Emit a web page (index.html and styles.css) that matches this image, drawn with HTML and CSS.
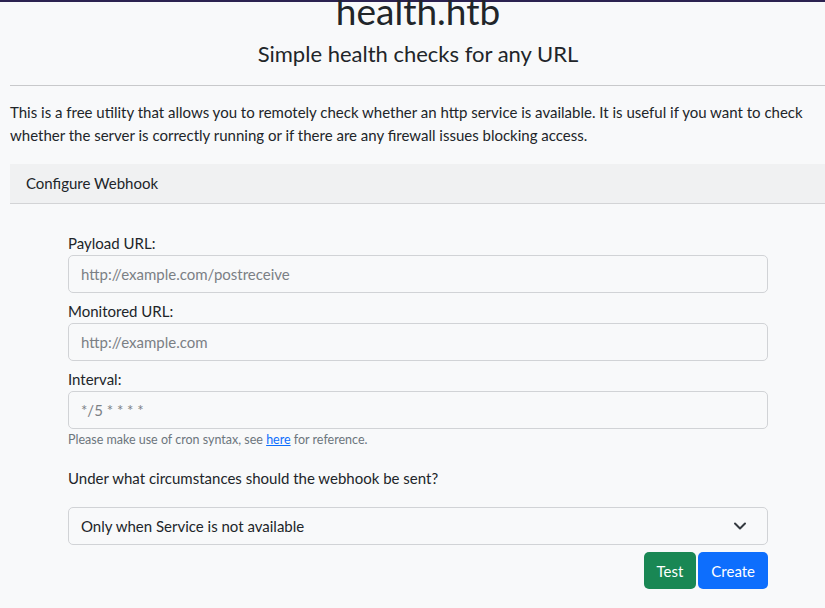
FILE: index.html
```html
<!DOCTYPE html>
<html lang="en">
<head>
<meta charset="utf-8">
<title>health.htb</title>
<link rel="stylesheet" href="styles.css">
</head>
<body>
<div class="topbar"></div>
<div class="page">
  <header class="hero">
    <h1 class="title">health.htb</h1>
    <h4 class="subtitle">Simple health checks for any URL</h4>
  </header>
  <hr class="rule">
  <p class="intro">This is a free utility that allows you to remotely check whether an http service is available. It is useful if you want to check whether the server is correctly running or if there are any firewall issues blocking access.</p>
  <section class="card">
    <div class="card-header">Configure Webhook</div>
    <div class="card-body">
      <form class="form">
        <div class="group">
          <label class="label" for="payload">Payload URL:</label>
          <input class="input" id="payload" type="text" placeholder="http://example.com/postreceive">
        </div>
        <div class="group">
          <label class="label" for="monitored">Monitored URL:</label>
          <input class="input" id="monitored" type="text" placeholder="http://example.com">
        </div>
        <div class="group group-last">
          <label class="label" for="interval">Interval:</label>
          <input class="input" id="interval" type="text" placeholder="*/5 * * * *">
          <div class="help">Please make use of cron syntax, see <a href="#" class="link">here</a> for reference.</div>
        </div>
        <div class="question">Under what circumstances should the webhook be sent?</div>
        <div class="select">
          <span>Only when Service is not available</span>
          <svg class="chevron" width="14" height="10" viewBox="0 0 14 10"><path d="M2 2.5l5 5 5-5" fill="none" stroke="#343a40" stroke-width="2" stroke-linecap="round" stroke-linejoin="round"/></svg>
        </div>
        <div class="actions">
          <button type="button" class="btn btn-test">Test</button>
          <button type="button" class="btn btn-create">Create</button>
        </div>
      </form>
    </div>
  </section>
</div>
</body>
</html>
```

FILE: styles.css
```css
html { overflow-x: hidden; }
body {
  margin: 0;
  background: #f8f9fa;
  color: #212529;
  font-family: Lato, "Noto Sans", sans-serif;
  font-size: 15px;
}
.topbar {
  height: 2px;
  background: #2b2250;
}
.page {
  margin-left: 10px;
  width: 816px;
}
.hero {
  text-align: center;
}
.title {
  margin: -15px 0 0;
  font-size: 37px;
  line-height: 48px;
  font-weight: 400;
}
.subtitle {
  margin: 4px 0 0;
  font-size: 22px;
  line-height: 30px;
  font-weight: 400;
}
.rule {
  margin: 16px 0 0;
  border: 0;
  border-top: 1px solid #c8c9cb;
}
.intro {
  margin: 15px 0 0;
  line-height: 23px;
  width: 800px;
}
.card {
  margin-top: 17px;
}
.card-header {
  background: #f0f1f2;
  border-bottom: 1px solid #d3d4d6;
  height: 39px;
  line-height: 39px;
  padding-left: 16px;
}
.card-body {
  padding-top: 28px;
}
.form {
  width: 700px;
  margin: 0 auto;
}
.group {
  margin-bottom: 7px;
}
.label {
  display: block;
  line-height: 22px;
  margin-bottom: 1px;
}
.input {
  display: block;
  box-sizing: border-box;
  width: 100%;
  height: 38px;
  padding: 0 12px;
  border: 1px solid #d1d3d6;
  border-radius: 5px;
  background: #f8f9fa;
  font: inherit;
  color: #212529;
}
.input::placeholder {
  color: #7b8085;
}
.group-last {
  margin-bottom: 0;
}
.help {
  font-size: 12.5px;
  line-height: 21px;
  color: #6c757d;
}
.link {
  color: #0d6efd;
}
.question {
  margin-top: 17px;
  line-height: 22px;
}
.select {
  margin-top: 18px;
  box-sizing: border-box;
  height: 38px;
  border: 1px solid #d1d3d6;
  border-radius: 5px;
  display: flex;
  align-items: center;
  justify-content: space-between;
  padding: 0 20px 0 12px;
}
.actions {
  margin-top: 7px;
  display: flex;
  justify-content: flex-end;
  gap: 2px;
}
.btn {
  height: 37px;
  border: 0;
  border-radius: 5px;
  color: #fff;
  font: inherit;
  padding: 0 13px;
}
.btn-test { background: #198754; }
.btn-create { background: #0d6efd; }
```
